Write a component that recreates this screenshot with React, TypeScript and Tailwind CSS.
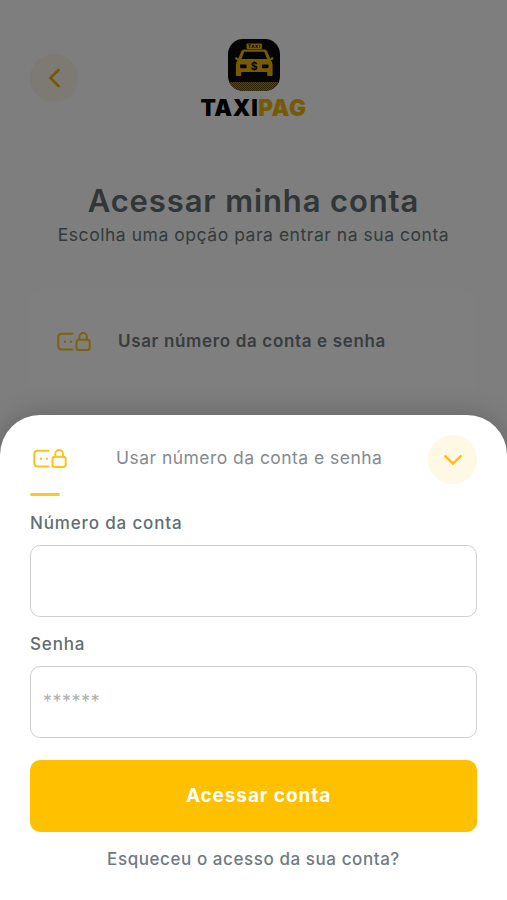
import { useState } from "react";
import clsx from "clsx";

const TaxiLogo = () => (
  <svg width="54" height="54" viewBox="0 0 54 54" aria-hidden="true">
    <defs>
      <clipPath id="logo-shape">
        <rect x="1" y="1" width="52" height="52" rx="15" />
      </clipPath>
      <pattern
        id="logo-dots"
        width="2"
        height="2"
        patternUnits="userSpaceOnUse"
      >
        <rect width="2" height="2" fill="#5c4708" />
        <rect width="1" height="1" fill="#b38a0c" />
        <rect x="1" y="1" width="1" height="1" fill="#b38a0c" />
      </pattern>
    </defs>
    <g clipPath="url(#logo-shape)">
      <rect width="54" height="54" fill="#080808" />
      <rect y="44" width="54" height="10" fill="url(#logo-dots)" />
    </g>
    <rect x="19.5" y="5.5" width="15.5" height="5.5" rx="1" fill="#eeb408" />
    <path
      fill="#eeb408"
      fillRule="evenodd"
      d="M17 11.5h20.500q2 0 2.800 2l2.500 6 .6 1.200 1.200-1.500h1.400q1 1.800-.4 2.500l-1.700.6q1.700 2 1.700 4.500V37q0 1-1 1h-3.400q-1 0-1-1v-3H14.300v3q0 1-1 1H9.900q-1 0-1-1V26.800q0-2.500 1.700-4.500l-1.700-.6q-1.400-.7-.4-2.500h1.400l1.200 1.500.6-1.200 2.500-6q.8-2 2.800-2ZM17.200 13.700 14.500 21h25.500l-2.700-7.300Z"
    />
    <path
      d="M21.500 6.900h2.400M22.700 6.900v3M25 9.900l1.100-3 1.100 3M28.600 6.900l2 3M30.600 6.900l-2 3M32.600 6.900v3"
      stroke="#080808"
      strokeWidth=".8"
      fill="none"
    />
    <path
      fill="#080808"
      d="M13 26.500h5.600q1 0 1 1v1.800q0 1-1 1h-4.200q-1 0-1.400-1ZM41.500 26.500h-5.600q-1 0-1 1v1.800q0 1 1 1h4.200q1 0 1.400-1Z"
    />
    <text
      x="27.2"
      y="32"
      textAnchor="middle"
      fontFamily="Inter, sans-serif"
      fontSize="10.5"
      fontWeight="700"
      fill="#080808"
    >
      $
    </text>
  </svg>
);

const AccountLockIcon = () => (
  <svg
    width="34"
    height="20"
    viewBox="0 0 34 20"
    fill="none"
    stroke="#ffc21c"
    strokeWidth="2"
    strokeLinecap="round"
    strokeLinejoin="round"
    aria-hidden="true"
  >
    <path d="M15.500 1.700H4.800Q1.300 1.700 1.300 5.200v8.900q0 3.500 3.500 3.500h10.700" />
    <rect x="19.500" y="7.800" width="13.200" height="10.200" rx="2.300" />
    <path d="M22.300 7.800V4.900a3.800 3.800 0 0 1 7.600 0v2.900" />
    <circle cx="7.9" cy="9.800" r="1.200" fill="#ffc21c" stroke="none" />
    <circle cx="13.9" cy="9.800" r="1.200" fill="#ffc21c" stroke="none" />
  </svg>
);

interface FieldProps {
  id: string;
  label: string;
  type: string;
  value: string;
  placeholder?: string;
  labelClass?: string;
  onChange: (value: string) => void;
}

const Field = ({
  id,
  label,
  type,
  value,
  placeholder,
  labelClass,
  onChange
}: FieldProps) => (
  <div className="flex flex-col gap-2.5">
    <label
      htmlFor={id}
      className={clsx(
        "h-6 text-[17px]/6 font-medium tracking-[0.85px] text-[#616e73]",
        labelClass
      )}
    >
      {label}
    </label>
    <input
      id={id}
      type={type}
      value={value}
      placeholder={placeholder}
      onChange={(e) => onChange(e.target.value)}
      className="h-[72px] w-full rounded-[10px] border-[1.5px] border-[#d0d0d0] bg-white px-3 pb-0.5 text-[18px] tracking-[0.5px] text-[#616e73] outline-none placeholder:text-[#b0b0b0]"
    />
  </div>
);

const App = () => {
  const [account, setAccount] = useState("");
  const [password, setPassword] = useState("");

  return (
    <div className="relative h-[900px] w-full overflow-hidden bg-[#fcfcfc] font-[Inter,sans-serif]">
      <div className="flex flex-col px-[30px] pt-[38px]">
        <div className="grid h-[84px] grid-cols-[48px_1fr_48px]">
          <button
            aria-label="Voltar"
            className="mt-4 flex size-12 items-center justify-center rounded-full bg-[#f9f4e5]"
          >
            <svg width="12" height="20" viewBox="0 0 12 20" fill="none">
              <path
                d="M10.500 2 2.500 10l8 8"
                stroke="#f5ab0c"
                strokeWidth="2.6"
                strokeLinecap="round"
              />
            </svg>
          </button>
          <div className="flex flex-col items-center">
            <TaxiLogo />
            <p className="mt-0.5 whitespace-nowrap text-[22.5px]/7 font-black tracking-[0.6px] text-black">
              TAXI<span className="text-[#eeb408]">PAG</span>
            </p>
          </div>
        </div>
        <h1 className="mt-[59px] text-center text-[31px]/10 font-semibold tracking-[0.88px] whitespace-nowrap text-[#626d72]">
          Acessar minha conta
        </h1>
        <p className="mt-0.5 text-center text-[17.5px]/6 tracking-[0.54px] whitespace-nowrap text-[#6a757a]">
          Escolha uma opção para entrar na sua conta
        </p>
        <div className="mt-[42px] flex h-[106px] items-center gap-[27px] rounded-xl bg-white pl-[27px]">
          <AccountLockIcon />
          <span className="text-[17px] font-semibold tracking-[0.66px] whitespace-nowrap text-[#737b80]">
            Usar número da conta e senha
          </span>
        </div>
      </div>

      <div className="absolute inset-0 bg-black/50" />

      <div className="absolute inset-x-0 bottom-0 flex h-[485px] flex-col rounded-t-[40px] bg-white px-[30px] pt-[19px] shadow-[0_0_28px_rgba(0,0,0,0.2)]">
        <div className="flex h-[50px] items-center">
          <div className="w-[86px] pl-[3px]">
            <AccountLockIcon />
          </div>
          <span className="flex-1 pb-0.5 text-[17.5px] tracking-[0.46px] whitespace-nowrap text-[#858a91]">
            Usar número da conta e senha
          </span>
          <button
            aria-label="Fechar"
            className="flex size-[49px] items-center justify-center rounded-full bg-[#fff8e5]"
          >
            <svg width="20" height="12" viewBox="0 0 20 12" fill="none">
              <path d="m1.500 2.500 8.500 8 8.500-8" stroke="#ffb915" strokeWidth="2.4" />
            </svg>
          </button>
        </div>
        <div className="mt-[9px] mb-[15px] h-[3px] w-[30px] rounded-full bg-[#ffc629]" />
        <div className="flex flex-col gap-[15px]">
          <Field
            id="account"
            label="Número da conta"
            type="text"
            value={account}
            onChange={setAccount}
          />
          <Field
            id="password"
            label="Senha"
            type="password"
            value={password}
            placeholder="******"
            onChange={setPassword}
          />
        </div>
        <button className="mt-[22px] h-[72px] w-full shrink-0 rounded-[10px] bg-[#ffc000] pl-2.5 text-[19px] font-bold tracking-[0.9px] text-white">
          Acessar conta
        </button>
        <a
          href="#"
          className="mt-[15px] text-center text-[17px]/6 font-medium tracking-[0.57px] whitespace-nowrap text-[#707a82]"
        >
          Esqueceu o acesso da sua conta?
        </a>
      </div>
    </div>
  );
};

export default App;
